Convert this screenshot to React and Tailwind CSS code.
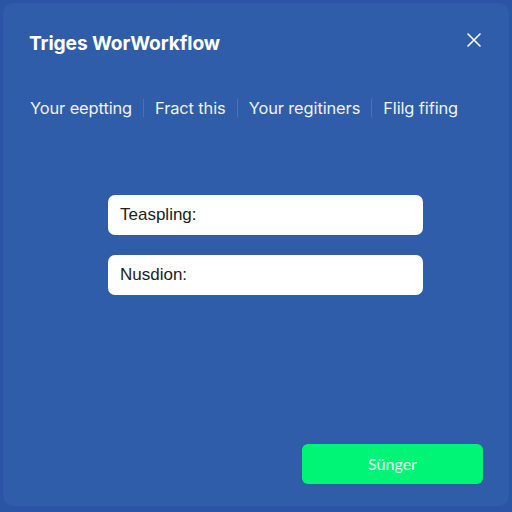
export default function App() {
  return (
    <div className="w-[512px] h-[512px] bg-[#2a54a4] p-[3px] pb-[6px]" style={{ fontFamily: '"Open Sans", "Liberation Sans", sans-serif' }}>
      <div className="h-full rounded-[10px] bg-[#2f5da9] flex flex-col">
        <div className="flex items-center justify-between pl-[26px] pr-[28px] pt-[28px]">
          <h1 className="text-[19.2px] font-bold text-white tracking-[-0.1px] leading-[24px]" style={{ fontFamily: 'Inter, "Liberation Sans", sans-serif' }}>Triges WorWorkflow</h1>
          <svg width="14" height="14" viewBox="0 0 14 14" className="mt-[-6px]">
            <path d="M1 1L13 13M13 1L1 13" stroke="white" strokeWidth="1.6" strokeLinecap="round" />
          </svg>
        </div>
        <div className="flex items-center mt-[42px] pl-[27px] text-[16.4px] text-[#eef2fa] leading-[22px] tracking-[-0.1px]" style={{ fontFamily: 'Inter, "Liberation Sans", sans-serif' }}>
          <span>Your eeptting</span>
          <span className="w-px h-[18px] bg-[#4a72b8] mx-[11px]"></span>
          <span>Fract this</span>
          <span className="w-px h-[18px] bg-[#4a72b8] mx-[11px]"></span>
          <span>Your regitiners</span>
          <span className="w-px h-[18px] bg-[#4a72b8] mx-[11px]"></span>
          <span>Flilg fifing</span>
        </div>
        <div className="flex flex-col gap-[20px] mt-[76px] ml-[105px] w-[315px]" style={{ fontFamily: '"Liberation Sans", Arial, sans-serif' }}>
          <div className="h-[40px] bg-white rounded-[7px] flex items-center pl-[12px] text-[17px] text-[#222]">Teaspling:</div>
          <div className="h-[40px] bg-white rounded-[7px] flex items-center pl-[12px] text-[17px] text-[#222]">Nusdion:</div>
        </div>
        <div className="flex-1"></div>
        <div className="flex justify-end pr-[26px] pb-[22px]">
          <button className="w-[181px] h-[40px] rounded-[6px] bg-[#00f577] text-[#e8fff0] text-[16px]" style={{ fontFamily: 'Lato, "Liberation Sans", sans-serif' }}>Sünger</button>
        </div>
      </div>
    </div>
  );
}
